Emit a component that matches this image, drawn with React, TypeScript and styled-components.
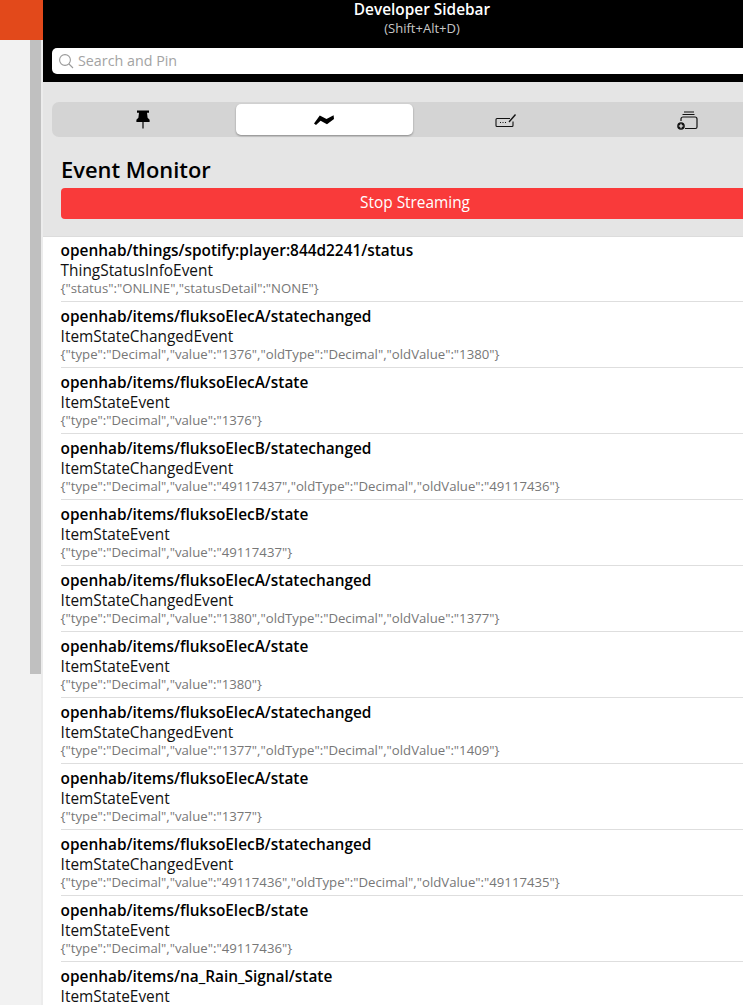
import * as React from 'react';
import styled, { createGlobalStyle } from 'styled-components';

const GlobalStyle = createGlobalStyle`
  html, body {
    margin: 0;
    height: 100%;
    overflow: hidden;
    background: #fff;
    font-family: "Open Sans", "Noto Sans", sans-serif;
  }
  #root {
    height: 100%;
  }
`;

const Page = styled.div`
  display: flex;
  width: 743px;
  height: 1005px;
  overflow: hidden;
`;

const Rail = styled.div`
  flex: 0 0 43px;
  display: flex;
  flex-direction: column;
  background: #f2f2f2;
`;

const RailBar = styled.div`
  height: 40px;
  background: #e2491b;
`;

const RailTrack = styled.div`
  flex: 1;
  display: flex;
  padding-left: 30px;
  border-right: 2px solid #ececec;
`;

const RailThumb = styled.div`
  width: 11px;
  height: 634px;
  background: #c0c0c0;
`;

const Panel = styled.div`
  flex: 0 0 744px;
  min-width: 0;
  display: flex;
  flex-direction: column;
  background: #fff;
`;

const Header = styled.div`
  height: 82px;
  box-sizing: border-box;
  background: #000;
  padding: 0 0 8px 9px;
  display: flex;
  flex-direction: column;
`;

const HeaderTitle = styled.div`
  height: 19px;
  line-height: 19px;
  padding-left: 5px;
  text-align: center;
  font-size: 15.4px;
  font-weight: 600;
  color: #fff;
`;

const HeaderHint = styled.div`
  height: 29px;
  line-height: 19px;
  padding-left: 5px;
  text-align: center;
  font-size: 13px;
  color: #c8c8c8;
`;

const SearchBox = styled.div`
  height: 26px;
  width: 780px;
  flex-shrink: 0;
  display: flex;
  align-items: center;
  gap: 4px;
  padding-left: 6px;
  border-radius: 5px;
  background: #fff;
`;

const SearchText = styled.span`
  margin-top: -2px;
  font-size: 14.3px;
  color: #a3a3a3;
`;

const Toolbar = styled.div`
  background: #e5e5e5;
  padding: 20px 9px 17px;
  border-bottom: 1px solid #dcdcdc;
`;

const Tabs = styled.div`
  width: 726px;
  height: 35px;
  display: flex;
  box-sizing: border-box;
  padding: 2px 0;
  border-radius: 7px;
  background: #d4d4d4;
`;

const Tab = styled.div<{ $active?: boolean }>`
  flex: 1;
  display: flex;
  align-items: center;
  justify-content: center;
  margin: 0 2px;
  border-radius: 5px;
  background: ${props => (props.$active ? '#fff' : 'transparent')};
  box-shadow: ${props => (props.$active ? '0 1px 2px rgba(0, 0, 0, 0.35)' : 'none')};
`;

const Title = styled.h1`
  margin: 17px 0 0 9px;
  height: 30px;
  line-height: 31px;
  font-size: 21.9px;
  font-weight: 600;
  color: #000;
`;

const StopButton = styled.div`
  margin: 4px 9px 0;
  height: 31px;
  line-height: 29px;
  border-radius: 4px;
  text-align: center;
  font-size: 15.4px;
  color: #fff;
  background: #f93a3a;
`;

const List = styled.div`
  padding-left: 17.6px;
`;

const Row = styled.div`
  height: 66px;
  box-sizing: border-box;
  padding-top: 5px;
  border-bottom: 1px solid #dedede;

  &:first-child {
    height: 65px;
    padding-top: 4px;
  }
`;

const Topic = styled.div`
  height: 20px;
  line-height: 20px;
  font-size: 15.4px;
  font-weight: 600;
  white-space: nowrap;
  color: #000;
`;

const EventType = styled.div`
  height: 19px;
  line-height: 20px;
  font-size: 15.4px;
  white-space: nowrap;
  color: #111;
`;

const Payload = styled.div`
  height: 16px;
  line-height: 16px;
  font-size: 13.2px;
  white-space: nowrap;
  color: #777;
`;

const decimal = (value: string) => `{"type":"Decimal","value":"${value}"}`;
const changed = (value: string, old: string) =>
  `{"type":"Decimal","value":"${value}","oldType":"Decimal","oldValue":"${old}"}`;

const events = [
  ['openhab/things/spotify:player:844d2241/status', 'ThingStatusInfoEvent', '{"status":"ONLINE","statusDetail":"NONE"}'],
  ['openhab/items/fluksoElecA/statechanged', 'ItemStateChangedEvent', changed('1376', '1380')],
  ['openhab/items/fluksoElecA/state', 'ItemStateEvent', decimal('1376')],
  ['openhab/items/fluksoElecB/statechanged', 'ItemStateChangedEvent', changed('49117437', '49117436')],
  ['openhab/items/fluksoElecB/state', 'ItemStateEvent', decimal('49117437')],
  ['openhab/items/fluksoElecA/statechanged', 'ItemStateChangedEvent', changed('1380', '1377')],
  ['openhab/items/fluksoElecA/state', 'ItemStateEvent', decimal('1380')],
  ['openhab/items/fluksoElecA/statechanged', 'ItemStateChangedEvent', changed('1377', '1409')],
  ['openhab/items/fluksoElecA/state', 'ItemStateEvent', decimal('1377')],
  ['openhab/items/fluksoElecB/statechanged', 'ItemStateChangedEvent', changed('49117436', '49117435')],
  ['openhab/items/fluksoElecB/state', 'ItemStateEvent', decimal('49117436')],
  ['openhab/items/na_Rain_Signal/state', 'ItemStateEvent', ''],
];

const SearchIcon = () => (
  <svg width="16" height="16" viewBox="0 0 16 16" fill="none" stroke="#9a9a9a" strokeWidth="1.1">
    <circle cx="7" cy="7" r="5.4" />
    <path d="M11 11l4 4" />
  </svg>
);

const PinIcon = () => (
  <svg width="14" height="19" viewBox="0 0 14 19" fill="#000">
    <path d="M1 .5h12v2.200h-2l.6 5 2 2v2.300H.4V9.700l2-2 .6-5H1z" />
    <path d="M6.400 11h1.200v7.500H6.400z" />
  </svg>
);

const WaveIcon = () => (
  <svg width="22" height="12" viewBox="0 0 22 12" fill="#000">
    <path d="M1 9.500L6.800 1.500l6.700 3.600L20.600 1.300 21 5 14 10.200 7.600 6.800 3 11z" />
  </svg>
);

const KeyboardIcon = () => (
  <svg width="22" height="16" viewBox="0 -1.500 22 16" fill="none" stroke="#111" strokeWidth="1.100">
    <path d="M15 5H2a1 1 0 0 0-1 1v6a1 1 0 0 0 1 1h15a1 1 0 0 0 1-1V8" />
    <path d="M14 8.500L20.500 1" strokeWidth="1.400" />
    <path d="M5 9h1M7.500 9h1M10 9h1" />
  </svg>
);

const NewTabIcon = () => (
  <svg width="21" height="20" viewBox="0 -1 21 20" fill="none" stroke="#111" strokeWidth="1.200">
    <path d="M7 1h10M5.500 3.500h12" />
    <path d="M4 10V8a2 2 0 0 1 2-2h12a2 2 0 0 1 2 2v8a1.500 1.500 0 0 1-1.500 1.500H8" />
    <circle cx="4" cy="15" r="3.800" fill="#111" stroke="none" />
    <path d="M1.800 15h4.400M4 12.800v4.400" stroke="#fff" strokeWidth="1.100" />
  </svg>
);

export default function App() {
  return (
    <Page>
      <GlobalStyle />
      <Rail>
        <RailBar />
        <RailTrack>
          <RailThumb />
        </RailTrack>
      </Rail>
      <Panel>
        <Header>
          <HeaderTitle>Developer Sidebar</HeaderTitle>
          <HeaderHint>(Shift+Alt+D)</HeaderHint>
          <SearchBox>
            <SearchIcon />
            <SearchText>Search and Pin</SearchText>
          </SearchBox>
        </Header>
        <Toolbar>
          <Tabs>
            <Tab><PinIcon /></Tab>
            <Tab $active><WaveIcon /></Tab>
            <Tab><KeyboardIcon /></Tab>
            <Tab><NewTabIcon /></Tab>
          </Tabs>
          <Title>Event Monitor</Title>
          <StopButton>Stop Streaming</StopButton>
        </Toolbar>
        <List>
          {events.map(([topic, type, payload], i) => (
            <Row key={i}>
              <Topic>{topic}</Topic>
              <EventType>{type}</EventType>
              <Payload>{payload}</Payload>
            </Row>
          ))}
        </List>
      </Panel>
    </Page>
  );
}
